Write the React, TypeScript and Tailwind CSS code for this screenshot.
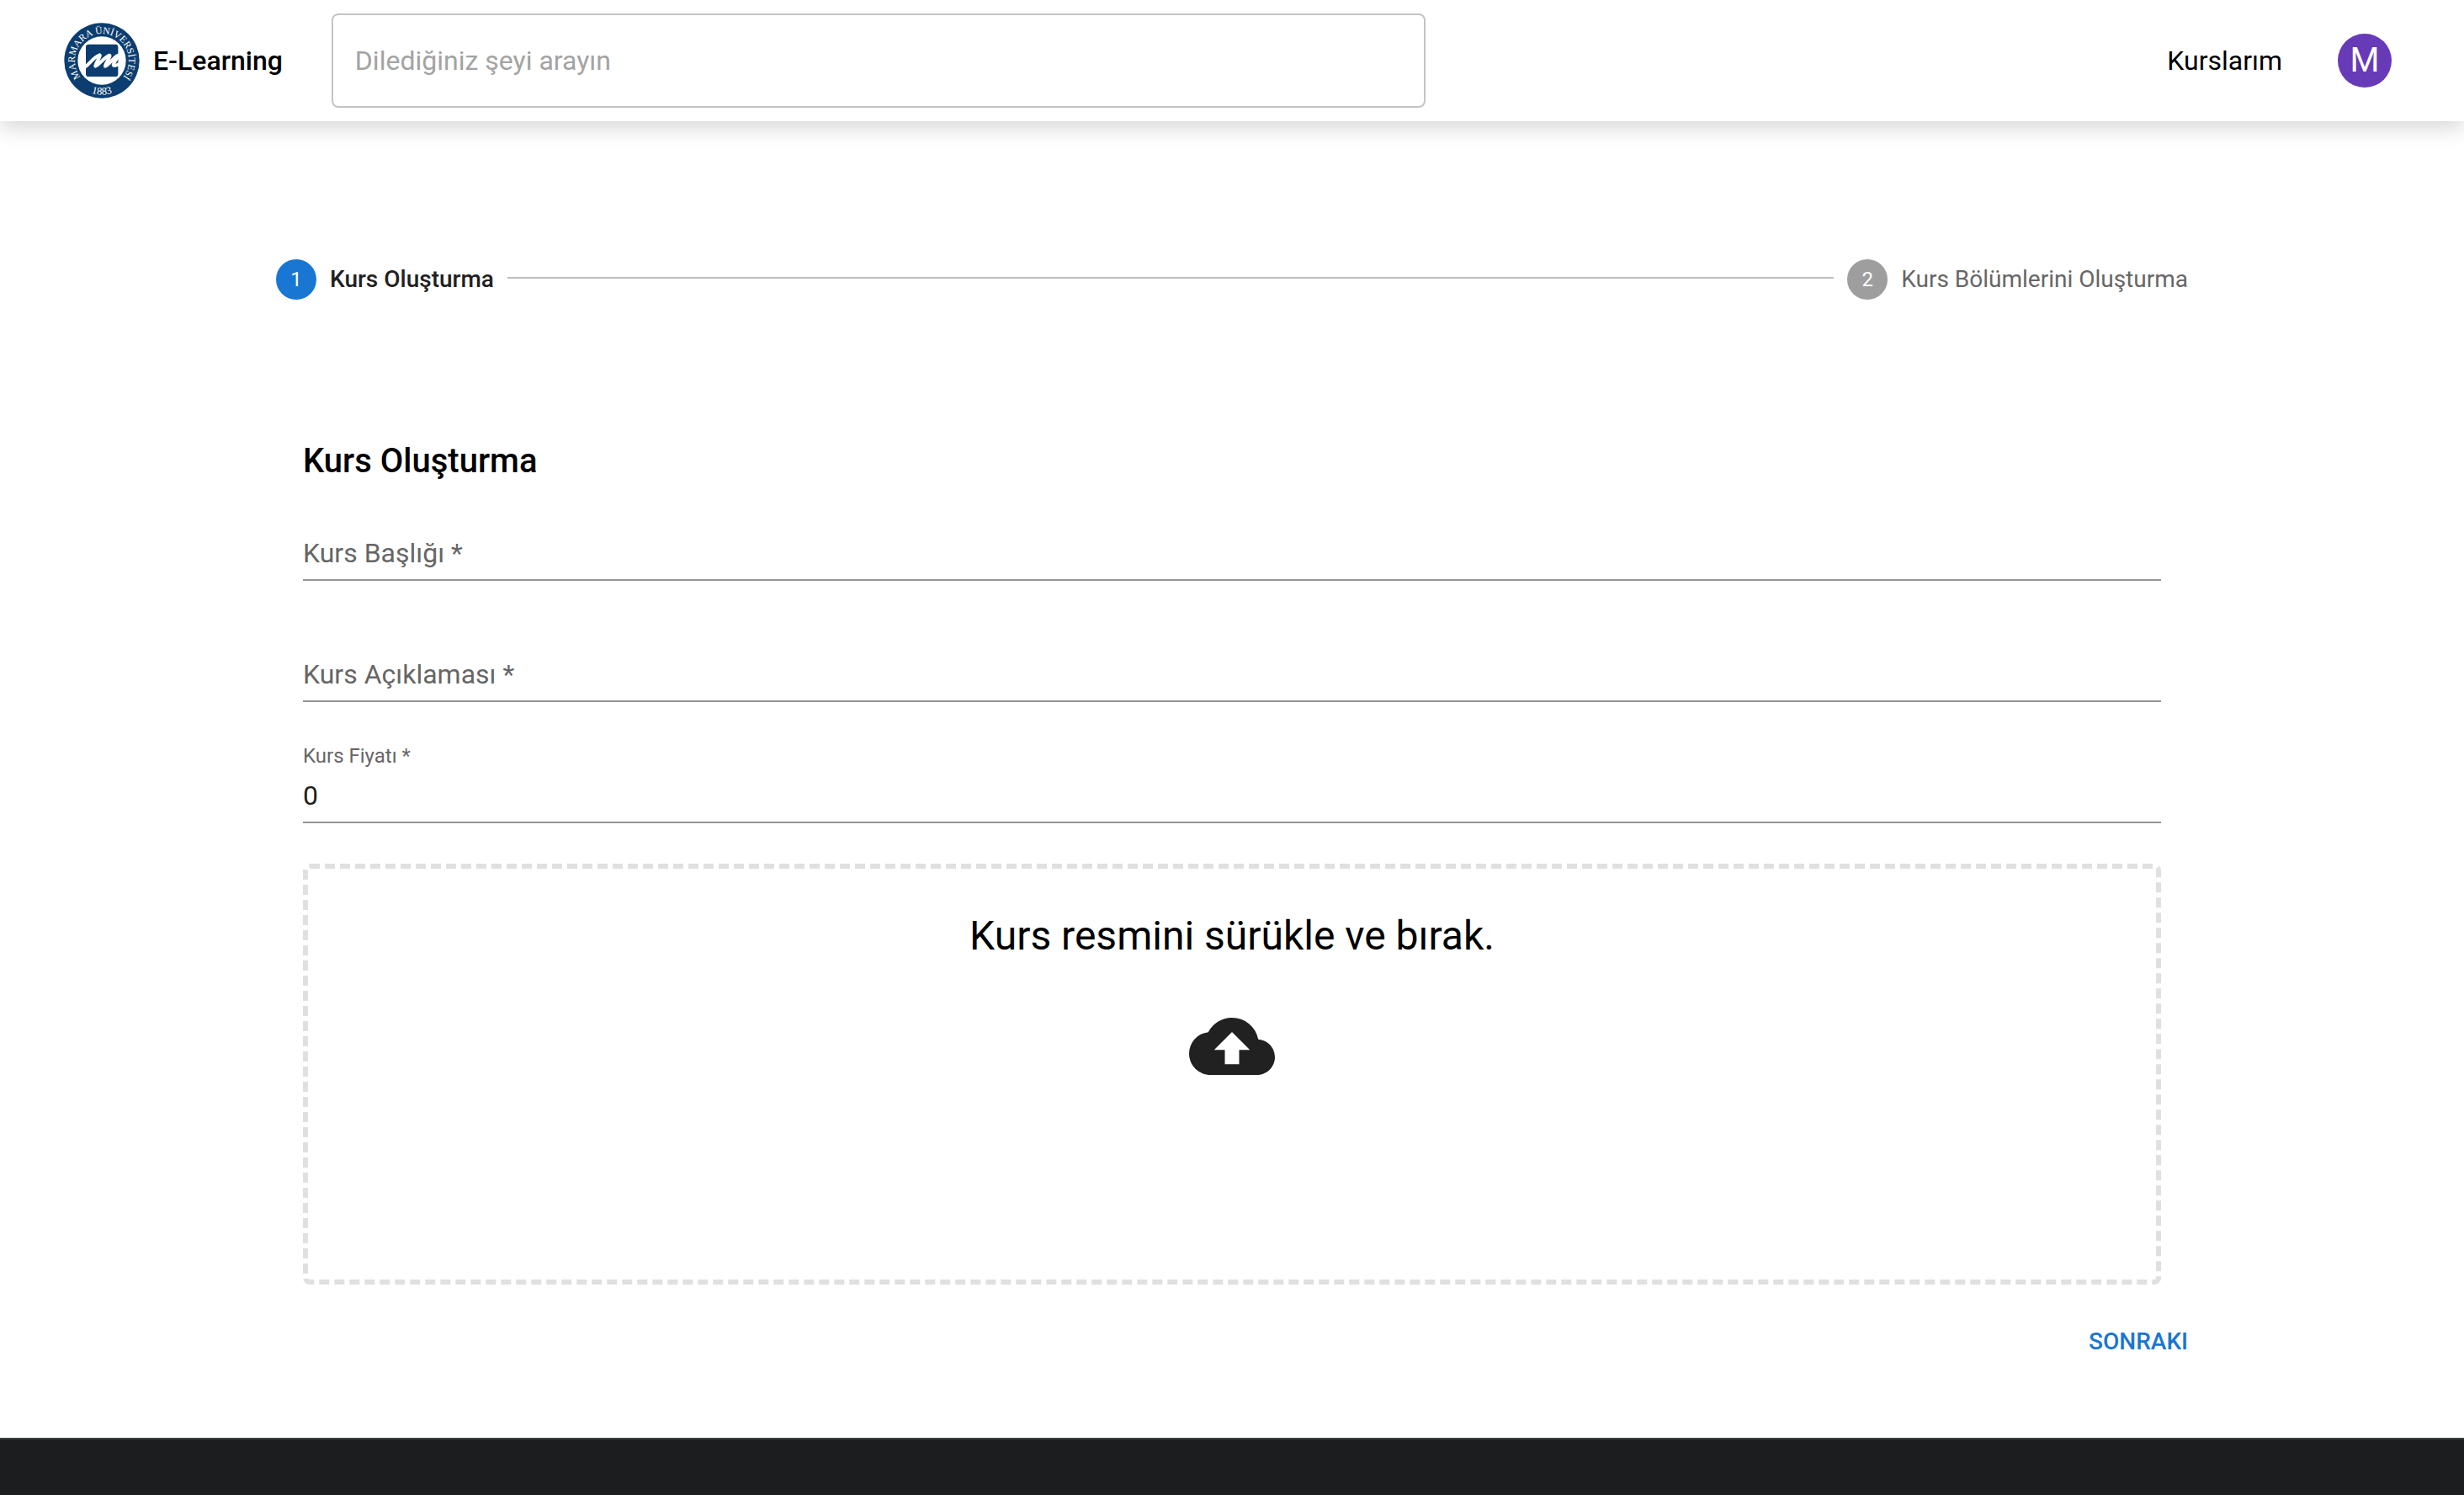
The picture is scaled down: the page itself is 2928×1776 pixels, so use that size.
import { MdCloudUpload } from "react-icons/md";

function Logo() {
  return (
    <svg viewBox="0 0 270 270" className="size-[90px] shrink-0" role="img" aria-label="Marmara Üniversitesi">
      <defs>
        <path id="ring-top" d="M 135 231 A 96 96 0 1 1 135.1 231" />
        <path id="ring-bottom" d="M 13 135 A 122 122 0 0 0 257 135" />
      </defs>
      <circle cx="135" cy="135" r="134" fill="#0b3d70" />
      <circle cx="135" cy="135" r="86" fill="#fff" />
      <rect x="78" y="77" width="115" height="115" rx="10" fill="#0b3d70" />
      <path
        d="M76 157 C92 146 106 122 127 115 C134 116 110 146 112 155 C120 156 142 124 162 116 C170 116 146 146 147 155 C156 156 172 128 191 117 C198 116 174 146 176 151 C178 155 186 152 192 149"
        fill="none"
        stroke="#fff"
        strokeWidth="12"
        strokeLinecap="round"
        strokeLinejoin="round"
      />
      <g fill="#fff" fontFamily="Liberation Serif, serif" fontSize="35" textAnchor="middle">
        <text>
          <textPath href="#ring-top" startOffset="50%">MARMARA ÜNİVERSİTESİ</textPath>
        </text>
        <text fontSize="38">
          <textPath href="#ring-bottom" startOffset="50%">1883</textPath>
        </text>
      </g>
    </svg>
  );
}

function Header() {
  return (
    <header className="flex h-36 items-center bg-white pl-[76px] pr-[86px] shadow-[0_8px_24px_0_rgba(0,0,0,0.16)]">
      <a href="#" className="flex shrink-0 items-center gap-4">
        <Logo />
        <span className="text-[32px] leading-[48px] font-medium text-black">E-Learning</span>
      </a>
      <input
        type="search"
        aria-label="Dilediğiniz şeyi arayın"
        placeholder="Dilediğiniz şeyi arayın"
        className="ml-[58px] h-28 w-full max-w-[1300px] min-w-0 rounded-lg border-2 border-[#c4c4c4] px-[26px] text-[32px] text-[#212121] placeholder:text-[#a3a3a3]"
      />
      <nav className="ml-auto flex shrink-0 items-center gap-[66px] pl-12">
        <a href="#" className="text-[32px] leading-[48px] text-black">
          Kurslarım
        </a>
        <button
          type="button"
          aria-label="Hesap"
          className="flex size-16 items-center justify-center rounded-full bg-[#673ab7] text-[40px] leading-none text-white"
        >
          M
        </button>
      </nav>
    </header>
  );
}

function Stepper() {
  return (
    <ol className="flex items-center gap-4 px-4 text-[28px] leading-10">
      <li aria-current="step" className="flex items-center gap-4 font-medium text-[#212121]">
        <span className="flex size-12 items-center justify-center rounded-full bg-[#1976d2] text-2xl font-normal text-white">
          1
        </span>
        Kurs Oluşturma
      </li>
      <li aria-hidden="true" className="mb-1 h-0.5 flex-1 bg-[#bdbdbd]" />
      <li className="flex items-center gap-4 text-[#666]">
        <span className="flex size-12 items-center justify-center rounded-full bg-[#9e9e9e] text-2xl text-white">
          2
        </span>
        Kurs Bölümlerini Oluşturma
      </li>
    </ol>
  );
}

type FieldProps = { id: string; label: string; type?: string; defaultValue?: string };

function Field({ id, label, type = "text", defaultValue }: FieldProps) {
  return (
    <div className="relative pt-8">
      <input
        id={id}
        type={type}
        required
        placeholder=" "
        defaultValue={defaultValue}
        className="peer block h-16 w-full border-b-2 border-[#949494] text-[32px] leading-[46px] text-[#212121] shadow-none outline-none focus:border-[#1976d2]"
      />
      <label
        htmlFor={id}
        className="pointer-events-none absolute top-0 left-0 text-2xl text-[#666] peer-placeholder-shown:top-10 peer-placeholder-shown:text-[32px] peer-placeholder-shown:leading-[46px]"
      >
        {label} *
      </label>
    </div>
  );
}

export default function App() {
  return (
    <div className="flex min-h-screen flex-col bg-white font-[Roboto,sans-serif] text-black">
      <Header />
      <main className="mx-auto w-full max-w-[2400px] px-12 pt-[164px] pb-[78px]">
        <Stepper />
        <form className="mt-40">
          <div className="px-12">
            <h1 className="mb-3.5 text-[40px] leading-[64px] font-medium">Kurs Oluşturma</h1>
            <div className="flex flex-col gap-12">
              <Field id="title" label="Kurs Başlığı" />
              <Field id="description" label="Kurs Açıklaması" />
              <Field id="price" label="Kurs Fiyatı" type="number" defaultValue="0" />
              <button
                type="button"
                className="flex min-h-[500px] w-full flex-col items-center gap-12 rounded-lg border-6 border-dashed border-[#e0e0e0] pt-12"
              >
                <span className="text-5xl leading-[64px]">Kurs resmini sürükle ve bırak.</span>
                <MdCloudUpload className="size-[102px] text-[#212121]" />
              </button>
            </div>
          </div>
          <div className="mt-8 flex justify-end">
            <button
              type="submit"
              className="rounded-lg px-4 py-3 text-[28px] leading-[48px] font-medium text-[#1976d2]"
            >
              SONRAKI
            </button>
          </div>
        </form>
      </main>
      <footer className="min-h-[68px] flex-1 border-t-2 border-[#3e4143] bg-[#1c1d1f]" />
    </div>
  );
}
